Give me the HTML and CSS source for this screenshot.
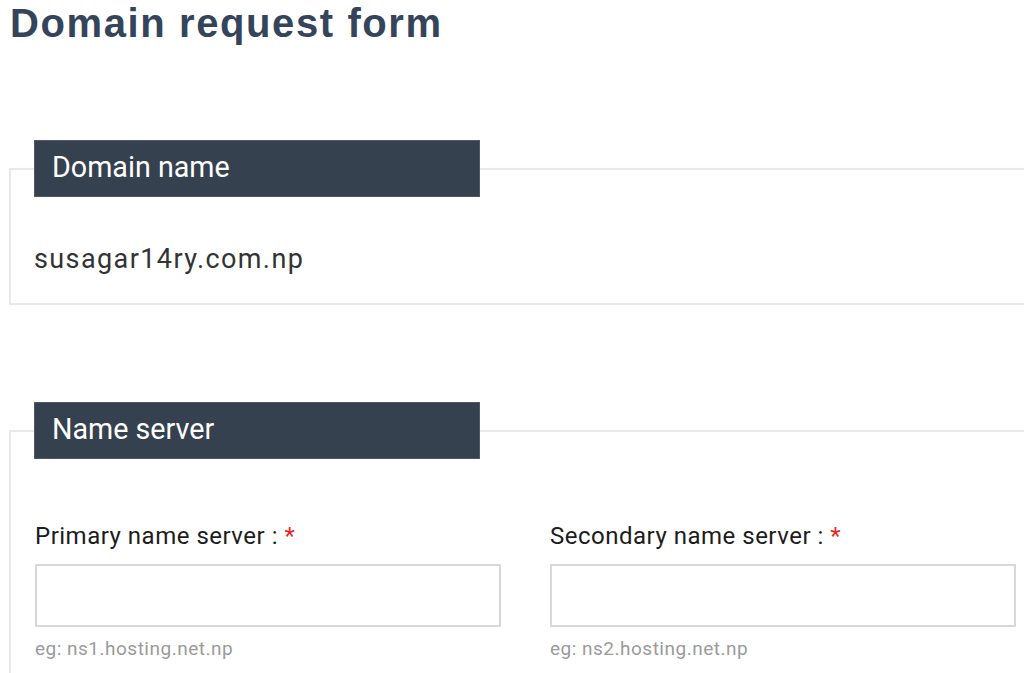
FILE: index.html
```html
<!DOCTYPE html>
<html lang="en">
<head>
<meta charset="utf-8">
<title>Domain request form</title>
<link rel="stylesheet" href="styles.css">
</head>
<body>
<main class="page">
  <h1 class="title">Domain request form</h1>
  <fieldset class="box box-domain">
    <legend class="box-legend">Domain name</legend>
    <p class="domain-value">susagar14ry.com.np</p>
  </fieldset>
  <fieldset class="box box-ns">
    <legend class="box-legend">Name server</legend>
    <div class="ns-grid">
      <div class="field">
        <label class="field-label" for="ns1">Primary name server : <span class="req">*</span></label>
        <input class="field-input" id="ns1" type="text">
        <div class="field-hint">eg: ns1.hosting.net.np</div>
      </div>
      <div class="field">
        <label class="field-label" for="ns2">Secondary name server : <span class="req">*</span></label>
        <input class="field-input" id="ns2" type="text">
        <div class="field-hint">eg: ns2.hosting.net.np</div>
      </div>
    </div>
  </fieldset>
</main>
</body>
</html>
```
FILE: styles.css
```css
html, body {
  margin: 0;
  padding: 0;
  background: #ffffff;
  overflow: hidden;
}
body {
  font-family: Roboto, "Liberation Sans", Arial, sans-serif;
  color: #222;
}
.page {
  width: 1060px;
  padding-left: 9px;
}
.title {
  margin: 0;
  padding-left: 1px;
  font-family: "Liberation Sans", Arial, sans-serif;
  font-weight: 700;
  font-size: 40px;
  line-height: 46px;
  color: #34455b;
  letter-spacing: 1.6px;
}
.box {
  margin: 0;
  border: 2px solid #e6eaf0;
  padding: 0 23px;
  min-width: 0;
}
.box-domain {
  margin-top: 94px;
  padding-bottom: 26px;
}
.box-ns {
  margin-top: 97px;
  padding-bottom: 40px;
}
.box-legend {
  box-sizing: border-box;
  width: 446px;
  height: 57px;
  padding: 0 17px;
  background: #36414f;
  border: 1px solid #4f5968;
  color: #ffffff;
  font-size: 28.7px;
  line-height: 53px;
}
.domain-value {
  margin: 44px 0 0;
  font-size: 27px;
  line-height: 36px;
  letter-spacing: 1.4px;
  color: #333333;
}
.ns-grid {
  display: grid;
  grid-template-columns: 466px 466px;
  column-gap: 49px;
  margin-top: 62px;
  padding-left: 1px;
}
.field {
  display: flex;
  flex-direction: column;
}
.field-label {
  font-size: 24px;
  line-height: 30px;
  letter-spacing: 0.5px;
  color: #1c1c1c;
}
.req {
  color: #e8261e;
}
.field-input {
  box-sizing: border-box;
  margin-top: 13px;
  height: 63px;
  border: 2px solid #d8d8d8;
  background: #fff;
  outline: none;
  padding: 0 12px;
}
.field-hint {
  margin-top: 10px;
  font-size: 19px;
  line-height: 24px;
  letter-spacing: 0.5px;
  color: #9a9a9a;
}
```
